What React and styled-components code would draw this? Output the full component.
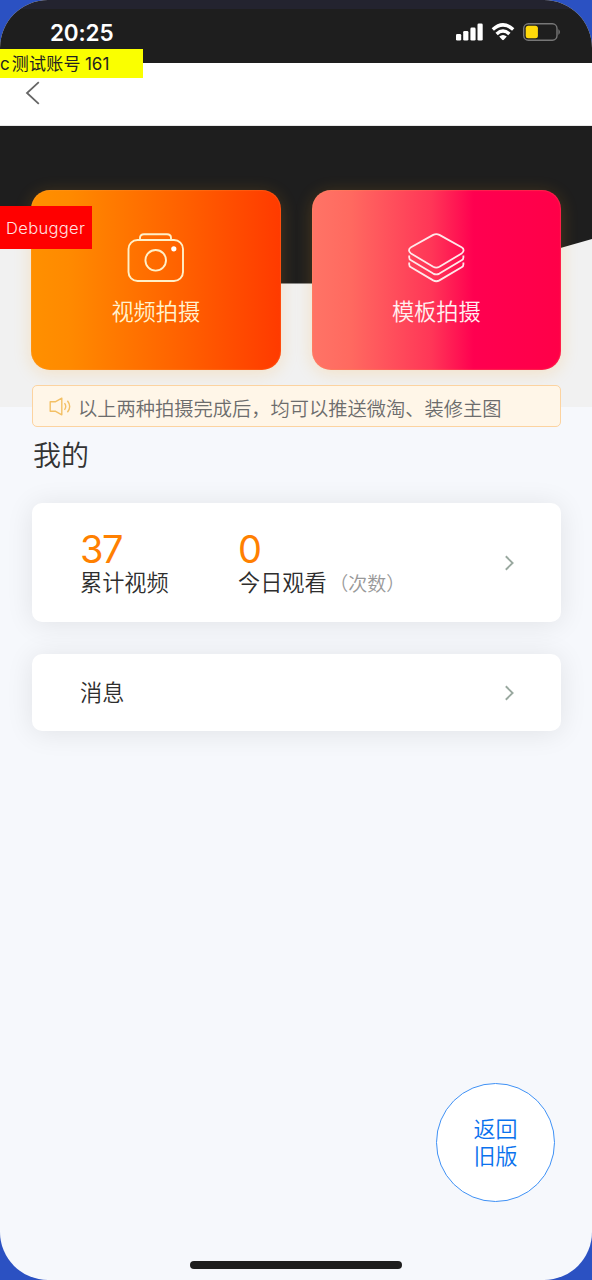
import styled, { createGlobalStyle } from "styled-components";

const shootTypes = [
  { id: "video", name: "视频拍摄", bg: "linear-gradient(90deg, #ff9000 0%, #ff8a00 15%, #ff6600 55%, #ff3a00 100%)" },
  { id: "template", name: "模板拍摄", bg: "linear-gradient(90deg, #ff7466 0%, #ff6a60 15%, #ff3657 48%, #ff0050 65%, #ff0048 100%)" },
];

const CameraIcon = () => (
  <svg width="58" height="50" viewBox="0 0 58 50" fill="none" stroke="#fff0c8" strokeWidth="1.9">
    <rect x="1.5" y="7" width="54.5" height="41" rx="9" />
    <path d="M13 6V5Q13 1.3 17 1.3H40Q44 1.3 44 5V6" />
    <circle cx="28.7" cy="27.3" r="10.3" />
    <circle cx="46.8" cy="15.8" r="2.6" fill="#fff" stroke="none" />
  </svg>
);

const LayersIcon = () => (
  <svg width="58" height="50" viewBox="0 0 58 50" fill="none" stroke="#ffe9ea" strokeWidth="1.8" strokeLinejoin="round">
    <path d="M26.2 1.9Q29.3 .2 32.4 1.9L54.6 14.3Q56.6 15.4 56.6 17.3Q56.6 19.2 54.6 20.5L32.4 33.8Q29.3 35.5 26.2 33.8L4 20.5Q2 19.2 2 17.3Q2 15.4 4 14.3Z" />
    <path d="M2.2 22.5V24.4Q2.2 26.2 4 27.3L26.2 40.6Q29.3 42.3 32.4 40.6L54.6 27.3Q56.4 26.2 56.4 24.4V22.5" />
    <path d="M2.2 29.6V31.4Q2.2 33.2 4 34.3L26.2 47.4Q29.3 49.1 32.4 47.4L54.6 34.3Q56.4 33.2 56.4 31.4V29.6" />
  </svg>
);

const Arrow = () => (
  <svg width="10" height="16" viewBox="0 0 10 16" fill="none" stroke="#99a89f" strokeWidth="1.9">
    <path d="M0.8 1.3L7.6 8L0.8 14.7" />
  </svg>
);

const App = () => {
  return (
    <>
      <GlobalStyle />
      <Backdrop>
        <Screen>
          <StatusBar>
            <Clock>20:25</Clock>
            <StatusIcons>
              <svg width="104" height="18" viewBox="0 0 104 18">
                <g fill="#fff">
                  <rect x="0" y="11" width="5.2" height="6.5" rx="1.3" />
                  <rect x="7.2" y="8" width="5.2" height="9.5" rx="1.3" />
                  <rect x="14.4" y="4.6" width="5.2" height="12.9" rx="1.3" />
                  <rect x="21.5" y="0.5" width="5.2" height="17" rx="1.3" />
                </g>
                <g fill="none" stroke="#fff" strokeWidth="3.4">
                  <path d="M36.8 6.5Q47 -2.8 57.2 6.5" />
                  <path d="M40.6 10.9Q47 5 53.4 10.9" />
                </g>
                <path d="M43.2 13.6Q47 10.6 50.8 13.6L47.8 16.8Q47 17.6 46.2 16.8Z" fill="#fff" />
                <rect x="67.7" y="0.8" width="33.3" height="16.4" rx="4.6" fill="none" stroke="#777" strokeWidth="1.4" />
                <rect x="69.7" y="2.8" width="12.2" height="12.4" rx="2.5" fill="#ffd90a" />
                <path d="M102.5 6Q105 9 102.5 12Z" fill="#888" />
              </svg>
            </StatusIcons>
          </StatusBar>
          <NavBar>
            <svg width="16" height="24" viewBox="0 0 16 24" fill="none" stroke="#666" strokeWidth="1.8">
              <path d="M13.8 1.2L2 12L13.8 22.8" />
            </svg>
          </NavBar>
          <Account>c<span>测试账号</span>161</Account>

          <Hero>
            <HeroShape viewBox="0 0 592 158" preserveAspectRatio="none">
              <path d="M0 0H592V113L436 157.5H156L0 113Z" fill="#1e1e1e" />
            </HeroShape>
            <ShootList>
              {shootTypes.map((type) => (
                <ShootCard key={type.id} $bg={type.bg}>
                  {type.id === "video" ? <CameraIcon /> : <LayersIcon />}
                  <ShootName $warm={type.id === "video"}>{type.name}</ShootName>
                </ShootCard>
              ))}
            </ShootList>
          </Hero>
          <Debugger>Debugger</Debugger>

          <Content>
            <Notice>
              <svg width="23" height="20" viewBox="0 0 23 20" fill="none" stroke="#f3c065" strokeWidth="1.4" strokeLinejoin="round">
                <path d="M1.2 5.8H6.2L12.8 2.2V18.8L6.2 15.2H1.2Z" />
                <path d="M15.5 7.2Q18 10.5 15.5 13.8M18.4 4.8Q23 10.5 18.4 16.2" />
              </svg>
              <NoticeText>以上两种拍摄完成后，均可以推送微淘、装修主图</NoticeText>
            </Notice>
            <Title>我的</Title>
            <Panel $height="119px">
              <Stat $width="158px">
                <Count>37</Count>
                <Label>累计视频</Label>
              </Stat>
              <Stat>
                <Count>0</Count>
                <Label>
                  今日观看<Unit>（次数）</Unit>
                </Label>
              </Stat>
              <Arrow />
            </Panel>
            <Panel $height="77px">
              <Label>消息</Label>
              <Arrow />
            </Panel>
          </Content>

          <BackOld>
            返回
            <br />
            旧版
          </BackOld>
          <HomeBar />
        </Screen>
      </Backdrop>
    </>
  );
};

export default App;

const GlobalStyle = createGlobalStyle`
  * {
    box-sizing: border-box;
  }
  body {
    margin: 0;
    font-family: Inter, "Noto Sans CJK SC", sans-serif;
  }
  svg {
    flex: none;
    display: block;
  }
`;

const Backdrop = styled.div`
  background: #2b51c2;
`;

const Screen = styled.div`
  position: relative;
  width: 592px;
  height: 1280px;
  overflow: hidden;
  border-radius: 48px;
  background: #f6f8fc;
`;

const StatusBar = styled.header`
  display: flex;
  justify-content: space-between;
  height: 63px;
  padding: 0 32px 0 50px;
  background: linear-gradient(#23232f 0 9px, #1e1e1e 9px);
`;

const Clock = styled.div`
  margin-top: 18px;
  color: #fff;
  font-size: 22.5px;
  font-weight: 600;
  letter-spacing: -0.15px;
  line-height: 30px;
`;

const StatusIcons = styled.div`
  padding-top: 23px;
`;

const NavBar = styled.nav`
  height: 63px;
  padding: 18px 25px;
  background: #fff;
  border-bottom: 1px solid #e8e8e8;
`;

const Account = styled.div`
  position: absolute;
  top: 49px;
  left: 0;
  display: flex;
  width: 143px;
  height: 29px;
  background: #faff00;
  color: #222;
  font-size: 17px;
  line-height: 30px;

  span {
    margin: 0 4px 0 2px;
    letter-spacing: 0.3px;
  }
`;

const Hero = styled.section`
  position: relative;
  height: 281px;
  padding: 64px 31px 0;
  background: #f1f1f1;
`;

const HeroShape = styled.svg`
  position: absolute;
  top: 0;
  left: 0;
  width: 592px;
  height: 158px;
`;

const ShootList = styled.div`
  position: relative;
  display: flex;
  gap: 31px;
`;

const ShootCard = styled.div`
  display: flex;
  flex-direction: column;
  align-items: center;
  width: 250px;
  height: 180px;
  padding-top: 43px;
  border-radius: 19px;
  background: ${(props) => props.$bg};
  box-shadow: 0 3px 18px rgba(255, 160, 20, 0.2), inset 0 0 1px 1px rgba(255, 170, 80, 0.2);
`;

const ShootName = styled.div`
  margin-top: 14px;
  color: ${(props) => (props.$warm ? "#fff3cf" : "#fff0f0")};
  font-size: 22.2px;
  font-weight: 350;
  line-height: 30px;
`;

const Debugger = styled.div`
  position: absolute;
  top: 206px;
  left: 0;
  width: 92px;
  height: 43px;
  padding-left: 6px;
  background: #f00;
  color: #ffe3e3;
  font-size: 16.5px;
  font-weight: 300;
  letter-spacing: 0.35px;
  line-height: 44px;
`;

const Content = styled.main`
  position: relative;
  margin-top: -22px;
  padding: 0 31px 0 32px;
`;

const Notice = styled.div`
  display: flex;
  align-items: center;
  height: 42px;
  padding-left: 16px;
  border: 1px solid #fcd3a0;
  border-radius: 5px;
  background: #fff6e8;
`;

const NoticeText = styled.span`
  margin: 3px 0 0 6px;
  color: #6c6c6c;
  font-size: 19.25px;
  font-weight: 350;
  white-space: nowrap;
`;

const Title = styled.h2`
  margin: 9px 0 27px 1px;
  color: #333;
  font-size: 28px;
  font-weight: 350;
  line-height: 40px;
`;

const Panel = styled.div`
  display: flex;
  align-items: center;
  height: ${(props) => props.$height};
  margin-bottom: 32px;
  padding: 0 46px 0 48px;
  border-radius: 10px;
  background: #fff;
  box-shadow: 0 2px 28px rgba(0, 0, 0, 0.09);

  > svg {
    margin-left: auto;
  }
`;

const Stat = styled.div`
  width: ${(props) => props.$width || "auto"};
  padding-top: 3px;
`;

const Count = styled.div`
  color: #ff8000;
  font-size: 38px;
  font-weight: 400;
  letter-spacing: -1.5px;
  line-height: 38px;
`;

const Label = styled.div`
  height: 30px;
  color: #2e2e2e;
  font-size: 22.2px;
  font-weight: 350;
  line-height: 30px;
  white-space: nowrap;
`;

const Unit = styled.span`
  margin-left: 12px;
  color: #999;
  font-family: "Noto Sans CJK SC", sans-serif;
  font-size: 19px;
  line-height: 1;
  font-feature-settings: "halt";
`;

const BackOld = styled.button`
  position: absolute;
  top: 1083px;
  left: 436px;
  width: 119px;
  height: 119px;
  padding: 0;
  border: 1px solid #3f91f5;
  border-radius: 50%;
  background: #fff;
  color: #0a72ee;
  font-family: inherit;
  font-size: 22px;
  font-weight: 350;
  line-height: 27px;
`;

const HomeBar = styled.div`
  position: absolute;
  left: 190px;
  bottom: 11px;
  width: 212px;
  height: 8px;
  border-radius: 4px;
  background: #1e1e1e;
`;
